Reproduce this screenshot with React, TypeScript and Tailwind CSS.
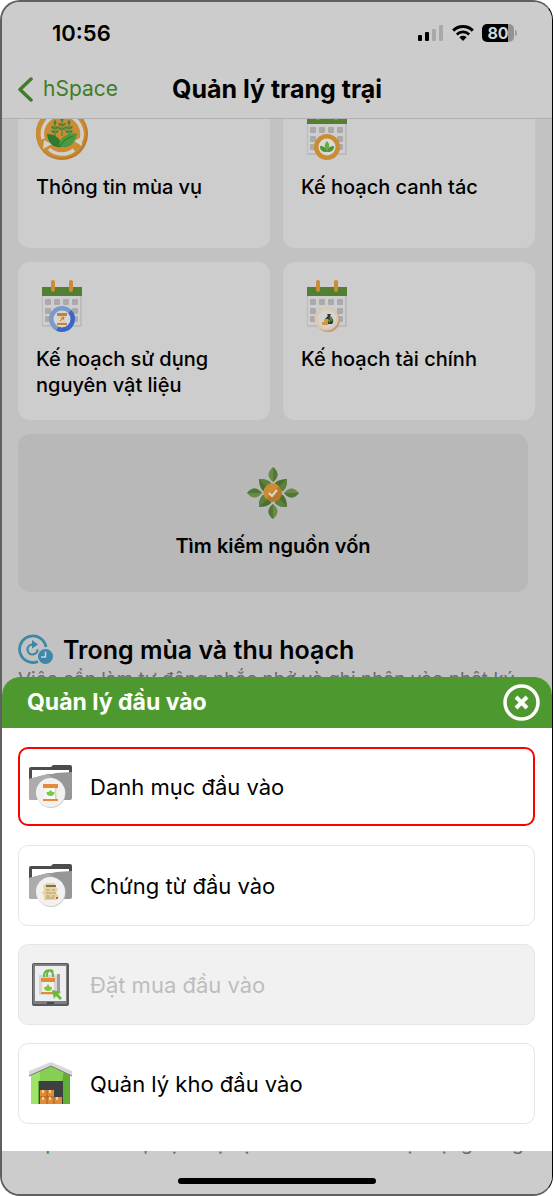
import type { ReactNode } from "react";

function SignalIcon() {
  return (
    <svg width="26" height="18" viewBox="0 0 26 18" aria-hidden="true">
      <rect x="0" y="11" width="4" height="6" rx="1" fill="#000" />
      <rect x="7" y="8" width="4" height="9" rx="1" fill="#000" />
      <rect x="14" y="5" width="4" height="12" rx="1" fill="#a9a9a9" />
      <rect x="21" y="1" width="4" height="16" rx="1" fill="#a9a9a9" />
    </svg>
  );
}

function WifiIcon() {
  return (
    <svg width="22" height="18" viewBox="0 0 22 18" aria-hidden="true">
      <path d="M1.2 6.6a14 14 0 0 1 19.6 0" fill="none" stroke="#000" strokeWidth="3" />
      <path d="M4.8 10.4a9 9 0 0 1 12.4 0" fill="none" stroke="#000" strokeWidth="2.8" />
      <path d="M7.4 13.2a5.2 5.2 0 0 1 7.2 0L11 17z" fill="#000" />
    </svg>
  );
}

function SeasonIcon() {
  return (
    <svg width="52" height="52" viewBox="0 0 52 52" aria-hidden="true">
      <circle cx="26" cy="26" r="26" fill="#b87c2b" />
      <circle cx="25" cy="25" r="25" fill="#ca8c34" />
      <path d="M7 31A19.500 19.500 0 0 1 20 7.500M32 7.500a19.500 19.500 0 0 1 13 25M38 42a19.500 19.500 0 0 1-25-1" fill="none" stroke="#d3d0ca" strokeWidth="3.500" />
      <path d="M7 41l1-9 8 4zM46 38l-8-5 8-4z" fill="#d3d0ca" />
      <g fill="#39853a">
        <path d="M25.500 28V10h1v18zM18.500 28V14h1v14zM32.500 28V14h1v14z" />
        <path d="M26 9c2 2 2 3 0 5-2-2-2-3 0-5zM25.500 18c-3 0-3-1-3-3 2 0 3 1 3 3zm1 0c3 0 3-1 3-3-2 0-3 1-3 3zM25.500 22c-3 0-3-1-3-3 2 0 3 1 3 3zm1 0c3 0 3-1 3-3-2 0-3 1-3 3z" />
        <path d="M19 12c2 2 2 3 0 5-2-2-2-3 0-5zM18.500 21c-3 0-3-1-3-3 2 0 3 1 3 3zm1 0c3 0 3-1 3-3-2 0-3 1-3 3zM18.500 25c-3 0-3-1-3-3 2 0 3 1 3 3zm1 0c3 0 3-1 3-3-2 0-3 1-3 3z" />
        <path d="M33 12c2 2 2 3 0 5-2-2-2-3 0-5zM32.500 21c-3 0-3-1-3-3 2 0 3 1 3 3zm1 0c3 0 3-1 3-3-2 0-3 1-3 3zM32.500 25c-3 0-3-1-3-3 2 0 3 1 3 3zm1 0c3 0 3-1 3-3-2 0-3 1-3 3z" />
      </g>
      <path d="M11 26c8 0 14 4 15 13-9 1-14-4-15-13z" fill="#2d7a30" />
      <path d="M41 25c-10 0-18 5-18 13 10 4 17-3 18-13z" fill="#4b983f" />
      <path d="M24 38c4-6 8-8 13-10" fill="none" stroke="#25742c" />
    </svg>
  );
}

function CalendarIcon({ children }: { children: ReactNode }) {
  return (
    <svg width="52" height="52" viewBox="0 0 52 52" aria-hidden="true">
      <rect x="6" y="7" width="40" height="40" rx="1" fill="#bcbcbc" />
      <rect x="7" y="15" width="37" height="30" fill="#cecece" />
      <rect x="6" y="7" width="40" height="9" fill="#537f33" />
      <rect x="15" y="0" width="4" height="12" rx="2" fill="#ca8c34" />
      <rect x="33" y="0" width="4" height="12" rx="2" fill="#ca8c34" />
      <g fill="#aaaaab">
        {[19, 28, 36].map((y) =>
          [9, 18, 27, 36].map((x) => (
            <rect key={`${x}-${y}`} x={x} y={y} width="6" height="6" rx="1" />
          ))
        )}
      </g>
      {children}
    </svg>
  );
}

function CropBadge() {
  return (
    <g>
      <circle cx="26" cy="39" r="13" fill="#ca8c34" />
      <circle cx="26" cy="39" r="8.500" fill="#dadada" />
      <path d="M26 33c3 3 3 7 0 11-3-4-3-8 0-11z" fill="#69ad3b" />
      <path d="M19 38c4 0 6 2 7 6-5 0-7-2-7-6zM33 38c-4 0-6 2-7 6 5 0 7-2 7-6z" fill="#4f9432" />
    </g>
  );
}

function MaterialBadge() {
  return (
    <g>
      <circle cx="26" cy="39" r="13" fill="#7b9acb" />
      <path d="M35.200 29.800A13 13 0 0 1 20 50.500z" fill="#3c66c6" />
      <circle cx="26" cy="39" r="8.500" fill="#d6d6d6" />
      <path d="M21 33h10v3H21zM21 43h10v2H21z" fill="#c58431" />
      <path d="M22 36h8c-1 3-1 4 0 7h-8c1-3 1-4 0-7z" fill="#ddcdb5" />
      <path d="M24 41l4-4M25 38l3-1-1 3" stroke="#c58431" fill="none" />
    </g>
  );
}

function MoneyBadge() {
  return (
    <g>
      <circle cx="27" cy="40" r="12" fill="#c49a6d" />
      <circle cx="25.500" cy="38.500" r="12" fill="#d9c9b8" />
      <circle cx="26" cy="39" r="9" fill="#d4d4d4" />
      <path d="M26 34h4l-1 2c4 3 4 6 2 8h-6c-2-3-1-6 2-8z" fill="#33382a" />
      <path d="M26 39l3 3M29 37l2 4" stroke="#4c9438" strokeWidth="2" />
      <path d="M21 42h6v3h-6zM23 39h4v3h-4z" fill="#d6953f" />
    </g>
  );
}

function FundingIcon() {
  return (
    <svg width="52" height="52" viewBox="0 0 52 52" aria-hidden="true">
      {[0, 90, 180, 270].map((angle) => (
        <g key={angle} transform={`rotate(${angle} 26 26)`}>
          <path d="M26 0c6 5 6 10 0 15-6-5-6-10 0-15z" fill="#668c43" />
          <path d="M26 0c6 5 6 10 0 15z" fill="#527638" />
          <path d="M27 24l1-8c3-3 7-4 12-4 0 6-1 9-4 12z" fill="#49702f" />
          <path d="M27 24l13-12c0 6-1 9-4 12z" fill="#5c803f" />
        </g>
      ))}
      <circle cx="26" cy="26" r="9" fill="#b67a2c" />
      <path d="M32 19A9 9 0 1 0 19 32z" fill="#ca8c34" />
      <path d="M22 26l3 3 5-6" fill="none" stroke="#e1d7ca" strokeWidth="2" />
    </svg>
  );
}

function HarvestIcon() {
  return (
    <svg width="36" height="32" viewBox="0 0 36 32" aria-hidden="true">
      <path d="M28 13A13.300 13.300 0 1 0 20 27.500" fill="none" stroke="#3d87a8" strokeWidth="2.800" />
      <path d="M15 10.500h-1a5 5 0 1 0 5.500 5" fill="none" stroke="#3d87a8" strokeWidth="2.200" />
      <path d="M14 6l6 4.500-6 4z" fill="#3d87a8" />
      <circle cx="27.500" cy="22.500" r="7.500" fill="#3d87a8" />
      <path d="M27.500 17.500v5.500H23" fill="none" stroke="#c8d3d8" strokeWidth="1.600" />
    </svg>
  );
}

function FolderIcon({ children }: { children: ReactNode }) {
  return (
    <svg width="43" height="43" viewBox="0 0 43 43" aria-hidden="true">
      <path d="M0 4q0-2 2-2h20l2-2h17q2 0 2 2v14H0z" fill="#4c4c4c" />
      <path d="M3 5h37v10H3z" fill="#fff" />
      <path d="M0 14l19-5h4l4-1 16-1v26q0 2-2 2H2q-2 0-2-2z" fill="#979797" />
      <path d="M0 14l19-5 12 9-17 17H2q-2 0-2-2z" fill="#acacac" />
      <circle cx="22" cy="28.500" r="14.500" fill="#cfcfcf" />
      <circle cx="21.500" cy="27.500" r="14.500" fill="#f1f1f1" />
      {children}
    </svg>
  );
}

function SeedBag() {
  return (
    <g>
      <path d="M15 22h13c-1 4-1 8 0 12H15c1-4 1-8 0-12z" fill="#fbf6f0" />
      <path d="M26 22h2c-1 4-1 8 0 12h-2z" fill="#e3cdb6" />
      <path d="M14 19h15v4H14zM14 34h15v2H14z" fill="#e58a3c" />
      <path d="M21.500 25l2 2 2 0c0 3-2 4-4 4s-4-1-4-4h2z" fill="#75ca45" />
    </g>
  );
}

function Voucher() {
  return (
    <g>
      <path d="M14 21q3 0 3-2h9v4q3 1 3 3l-2 3q3 2 3 4-1 3-5 3H15v-5l-2-2 2-3z" fill="#ead49d" />
      <path d="M17 22h10" stroke="#776e5d" strokeWidth="2" />
      <path d="M17 26h4M23 26h3M17 29h10M17 32h4M23 32h3M17 34h8" stroke="#ac9c78" />
      <path d="M28 33v2" stroke="#e45240" strokeWidth="2" />
    </g>
  );
}

function TabletIcon() {
  return (
    <svg width="43" height="43" viewBox="0 0 43 43" aria-hidden="true">
      <rect x="3" y="0" width="37" height="43" rx="2" fill="#585b5d" />
      <rect x="4" y="1" width="34" height="40" rx="1" fill="#7d8082" />
      <rect x="6" y="3" width="31" height="35" fill="#eeeeee" />
      <path d="M10 12h21v20H10z" fill="#d5d5d5" />
      <path d="M28 11h3v18h-3z" fill="#9d9d9d" />
      <path d="M15 14c-1-9 10-9 9 0M18 14c-1-6 4-9 6-5" fill="none" stroke="#67b544" strokeWidth="2" />
      <path d="M13 18h12v13H13z" fill="#f5eee7" />
      <path d="M12 15h14v4H12zM12 29h14v2H12z" fill="#e58a3c" />
      <path d="M19 21l2 3h2c0 3-2 4-4 4s-4-1-4-4h2z" fill="#75ca45" />
      <path d="M23 27l9 2-3 2 4 4-2 2-4-4-2 3z" fill="#69bd35" />
      <path d="M18 39h7v2h-7z" fill="#474a4b" />
    </svg>
  );
}

function WarehouseIcon() {
  return (
    <svg width="43" height="43" viewBox="0 0 43 43" aria-hidden="true">
      <path d="M2 12L22 3l19 9v30H2z" fill="#87ce54" />
      <path d="M35 9l6 3v30h-8V20z" fill="#5fae35" />
      <path d="M2 12l9-4v34H2z" fill="#a1e26d" />
      <path d="M9 19h26v23H9z" fill="#62af38" />
      <path d="M10 19h24v23H10z" fill="#3e4042" />
      <path d="M0 9L22 0l21 9v5L22 4 0 14z" fill="#d8d8d8" />
      <path d="M0 14L22 4l21 10" fill="none" stroke="#777b75" />
      <path d="M11 28h14v7h8v7H11z" fill="#df8c38" />
      <path d="M18 28v14M25 35v7M11 35h14" stroke="#a95f20" />
      <path d="M14 28v3M21 28v3M14 35v3M21 35v3M28 35v3" stroke="#f4cf9c" strokeWidth="2" />
    </svg>
  );
}

const plans = [
  { id: "season", label: "Thông tin mùa vụ", icon: <SeasonIcon /> },
  { id: "crop", label: "Kế hoạch canh tác", icon: <CalendarIcon><CropBadge /></CalendarIcon> },
  { id: "material", label: "Kế hoạch sử dụng nguyên vật liệu", icon: <CalendarIcon><MaterialBadge /></CalendarIcon> },
  { id: "finance", label: "Kế hoạch tài chính", icon: <CalendarIcon><MoneyBadge /></CalendarIcon> },
];

const inputs = [
  { id: "catalog", label: "Danh mục đầu vào", icon: <FolderIcon><SeedBag /></FolderIcon>, selected: true, disabled: false },
  { id: "voucher", label: "Chứng từ đầu vào", icon: <FolderIcon><Voucher /></FolderIcon>, selected: false, disabled: false },
  { id: "order", label: "Đặt mua đầu vào", icon: <TabletIcon />, selected: false, disabled: true },
  { id: "warehouse", label: "Quản lý kho đầu vào", icon: <WarehouseIcon />, selected: false, disabled: false },
];

export default function App() {
  return (
    <div className="bg-white pr-px font-['Inter','Noto_Sans',sans-serif] text-black">
      <div className="overflow-hidden rounded-[20px] border-2 border-r border-[#606060] border-r-black bg-[#c2c2c2]">
        <header className="relative z-10 border-b border-[#b0b0b0] bg-[#cccccc]">
          {/* Status bar */}
          <div className="flex items-center justify-between py-[18px] pl-[50px] pr-[35px]">
            <span className="text-[22px] font-semibold leading-[26px]">10:56</span>
            <div className="flex items-center gap-2">
              <SignalIcon />
              <WifiIcon />
              <div className="flex items-center gap-px">
                <span className="flex h-[18px] w-8 items-center justify-center rounded-[5px] bg-linear-to-r from-black from-80% to-[#939393] to-80% text-base font-bold leading-[18px] text-[#d4d4d4]">
                  80
                </span>
                <span className="h-1.5 w-0.5 rounded-r bg-[#a0a0a0]" />
              </div>
            </div>
          </div>

          {/* Navigation */}
          <div className="grid grid-cols-[1fr_auto_1fr] items-center px-4 pb-[13px] pt-[9px]">
            <a href="#" className="flex items-center gap-2.5 text-[21px] leading-8 text-[#417d27]">
              <svg width="15" height="25" viewBox="0 0 15 25" aria-hidden="true">
                <path d="M13 2L2 12.500 13 23" fill="none" stroke="currentColor" strokeWidth="3.500" strokeLinecap="round" strokeLinejoin="round" />
              </svg>
              hSpace
            </a>
            <h1 className="text-[25px] font-bold leading-8">Quản lý trang trại</h1>
          </div>
        </header>

        <main className="-mt-[29px] pl-4 pr-[17px]">
          <div className="grid grid-cols-2 gap-x-[13px] gap-y-3.5">
            {plans.map((plan) => (
              <button
                key={plan.id}
                className="flex min-h-[158px] flex-col items-start gap-3.5 rounded-xl bg-[#cdcdcd] px-[18px] pb-[22px] pt-[18px] text-left text-xl font-medium leading-[26px]"
              >
                {plan.icon}
                {plan.label}
              </button>
            ))}
          </div>

          <div className="mt-3.5 pr-[7px]">
            <button className="flex min-h-[158px] w-full flex-col items-center justify-center gap-3.5 rounded-xl bg-[#b8b8b8] text-xl font-semibold leading-[26px]">
              <FundingIcon />
              Tìm kiếm nguồn vốn
            </button>
          </div>

          <section className="mt-[42px]">
            <h2 className="flex items-center gap-[9px] text-[25px] font-semibold leading-8">
              <HarvestIcon />
              Trong mùa và thu hoạch
            </h2>
            {/* Only the top of this line shows above the sheet */}
            <p className="mt-0.5 max-h-[9px] overflow-hidden whitespace-nowrap text-[19px] leading-6 text-[#6b6b6b]">
              Việc cần làm tự động nhắc nhở và ghi nhận vào nhật ký
            </p>
          </section>
        </main>

        {/* Bottom sheet */}
        <section className="relative z-10 overflow-hidden rounded-t-[18px] bg-white">
          <div className="flex items-center justify-between bg-[#4e992f] py-[7px] pl-[25px] pr-3">
            <h2 className="text-[23px] font-bold leading-[37px] text-white">Quản lý đầu vào</h2>
            <button aria-label="Đóng">
              <svg width="37" height="37" viewBox="0 0 37 37" aria-hidden="true">
                <circle cx="18.500" cy="18.500" r="16.500" fill="none" stroke="#fff" strokeWidth="3.500" />
                <path d="M13 13l11 11M24 13l-11 11" stroke="#fff" strokeWidth="4" />
              </svg>
            </button>
          </div>
          <div className="flex flex-col gap-[18px] pb-[27px] pl-4 pr-[17px] pt-[18px]">
            {inputs.map((item) => (
              <button
                key={item.id}
                disabled={item.disabled}
                className={`flex items-center gap-[18px] rounded-[10px] text-left text-[22px] leading-7 ${
                  item.selected
                    ? "my-px border-2 border-[#ff0000] px-[9px] py-4"
                    : item.disabled
                    ? "border border-[#e6e6e6] bg-[#f1f1f1] px-2.5 py-[18px] text-[#bdbdbd]"
                    : "border border-[#e6e6e6] px-2.5 py-[18px]"
                }`}
              >
                {item.icon}
                {item.label}
              </button>
            ))}
          </div>
        </section>

        <footer className="-mt-[19px] bg-[#cccccc] pb-2.5">
          <p className="whitespace-nowrap pl-5 text-[19px] leading-6 text-[#6b6b6b]">
            <span className="text-[#417d27]">hSpace</span> sẽ cấp dịch vụ vật tư cho tất cả hoạt động nông
          </p>
          <div className="mx-auto mt-[22px] h-1.5 w-[198px] rounded-full bg-black" />
        </footer>
      </div>
    </div>
  );
}
